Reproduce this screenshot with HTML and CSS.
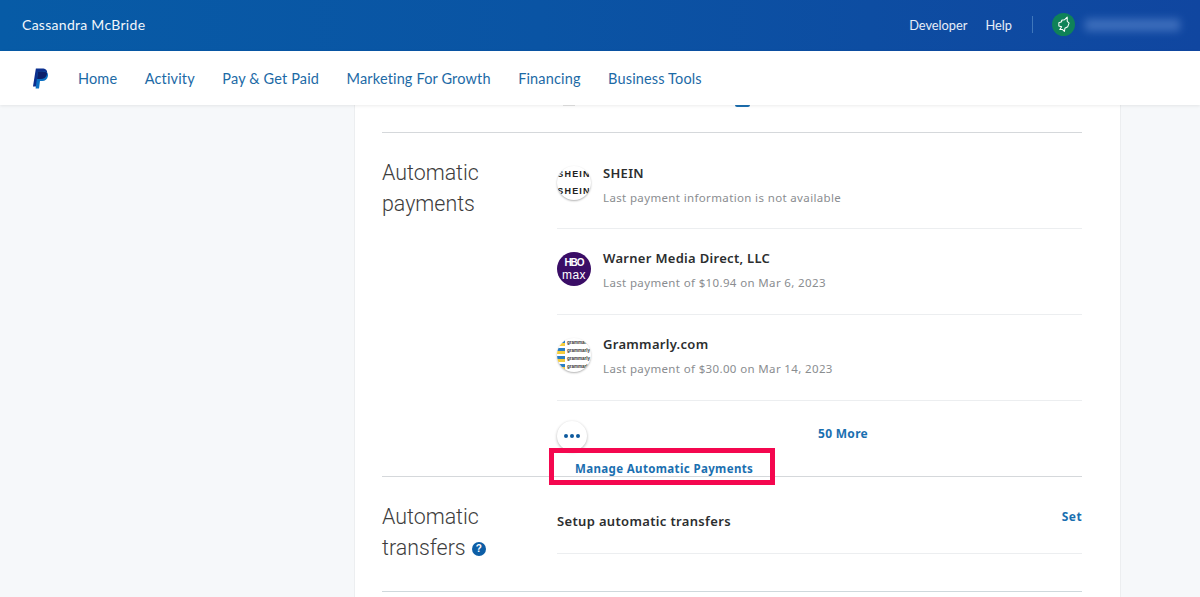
FILE: index.html
```html
<!DOCTYPE html>
<html lang="en">
<head>
<meta charset="utf-8">
<title>PayPal settings</title>
<link rel="stylesheet" href="styles.css">
</head>
<body>
<header class="topbar">
  <span class="user-name">Cassandra McBride</span>
  <div class="top-links">
    <a class="top-link">Developer</a>
    <a class="top-link">Help</a>
    <span class="top-sep"></span>
    <span class="avatar">
      <svg width="13" height="17" viewBox="0 0 14 18"><path d="M11 1 L11 5.5 L13 7.5 L11.5 11.5 L8.5 13 L8 16.5 L6 14.5 L3 14.5 L5 11.5 L2 10.5 L2 7 L5 6 L5 4.5 L8 4 Z" fill="none" stroke="#fff" stroke-width="1.1" stroke-linejoin="round"/></svg>
    </span>
    <span class="blurred-name"></span>
  </div>
</header>
<nav class="mainnav">
  <svg class="pp-logo" width="17" height="21" viewBox="0 0 19 24">
    <path d="M4.2 0.5h7.2c3.9 0 6.3 2.2 5.7 5.8-.7 4.2-3.7 6.3-7.4 6.3H6.6L5.2 21H0.9z" fill="#0b2f8f"/>
    <path d="M6.4 4h6.6c3.4 0 5.6 1.9 5 5.2-.6 3.8-3.3 5.7-6.6 5.7H8.9L7.8 23.5H3.9z" fill="#0a6fc2"/>
    <path d="M6.4 4h5.2c3 0 5 .9 5.5 2.3-.7 4.2-3.7 6.3-7.4 6.3H6.6l-1 .1z" fill="#0b1f6b"/>
  </svg>
  <a class="nav-link">Home</a>
  <a class="nav-link">Activity</a>
  <a class="nav-link">Pay &amp; Get Paid</a>
  <a class="nav-link">Marketing For Growth</a>
  <a class="nav-link">Financing</a>
  <a class="nav-link">Business Tools</a>
</nav>
<main class="page">
  <div class="card">
    <div class="clip-row">
      <span class="clip-grey"></span>
      <span class="clip-blue"></span>
    </div>
    <section class="section section-payments">
      <h2 class="section-title">Automatic<br>payments</h2>
      <div class="section-body">
        <div class="item item-first">
          <span class="logo logo-shein"><span>SHEIN</span><span>SHEIN</span></span>
          <div class="item-text">
            <div class="item-name">SHEIN</div>
            <div class="item-sub">Last payment information is not available</div>
          </div>
        </div>
        <div class="item">
          <span class="logo logo-hbo"><span class="hbo">HBO</span><span class="max">max</span></span>
          <div class="item-text">
            <div class="item-name">Warner Media Direct, LLC</div>
            <div class="item-sub">Last payment of $10.94 on Mar 6, 2023</div>
          </div>
        </div>
        <div class="item">
          <span class="logo logo-gram">
            <span class="gram-row">grammarly</span>
            <span class="gram-row">grammarly</span>
            <span class="gram-row">grammarly</span>
            <span class="gram-row">grammarly</span>
          </span>
          <div class="item-text">
            <div class="item-name">Grammarly.com</div>
            <div class="item-sub">Last payment of $30.00 on Mar 14, 2023</div>
          </div>
        </div>
        <div class="more-row">
          <span class="more-btn"><i></i><i></i><i></i></span>
          <a class="more-link">50 More</a>
        </div>
        <div class="manage-row">
          <a class="manage-link">Manage Automatic Payments</a>
          <span class="highlight"></span>
        </div>
      </div>
    </section>
    <section class="section section-transfers">
      <h2 class="section-title">Automatic<br>transfers <span class="help">?</span></h2>
      <div class="section-body">
        <div class="setup-row">
          <span class="setup-label">Setup automatic transfers</span>
          <a class="set-link">Set</a>
        </div>
      </div>
    </section>
  </div>
</main>
</body>
</html>
```
FILE: styles.css
```css
* { box-sizing: border-box; }
html, body { margin: 0; height: 100%; }
body {
  height: 597px;
  overflow: hidden;
  background: #f6f8fa;
  font-family: "Noto Sans", "Open Sans", sans-serif;
  display: flex;
  flex-direction: column;
}
.topbar {
  height: 51px;
  flex: none;
  padding: 0 20px 2px 22px;
  display: flex;
  align-items: center;
  justify-content: space-between;
  background: linear-gradient(90deg, #075ba6 0%, #0a54a4 45%, #1046a0 100%);
  color: #fff;
}
.user-name { font-family: "Lato", sans-serif; font-size: 14px; letter-spacing: .28px; color: #f1f6fb; }
.top-links { display: flex; align-items: center; }
.top-link { font-family: "Lato", sans-serif; font-size: 12.8px; letter-spacing: 0; color: #e6eef8; margin-right: 18px; }
.top-link + .top-link { margin-right: 20px; }
.top-sep { width: 1px; height: 17px; background: #3f77bb; margin-right: 19px; }
.avatar {
  width: 23px; height: 23px; border-radius: 50%;
  background: #0f8258;
  display: flex; align-items: center; justify-content: center;
  margin-right: 10px;
}
.blurred-name {
  width: 95px; height: 12px;
  background: #4a79c4;
  filter: blur(4px);
  opacity: .8;
}
.mainnav {
  height: 54px;
  flex: none;
  display: flex;
  align-items: center;
  padding: 0 0 0 32px;
  background: #fff;
  box-shadow: 0 1px 3px rgba(0,0,0,.08);
  position: relative;
  z-index: 2;
}
.pp-logo { margin-right: 29px; flex: none; }
.nav-link { font-family: "Lato", sans-serif; font-size: 14.5px; letter-spacing: .15px; color: #1c6aa6; margin-right: 27.5px; }
.page { flex: 1; min-height: 0; display: flex; padding-left: 354px; overflow: hidden; }
.card {
  width: 767px;
  flex: none;
  background: #fff;
  border-left: 1px solid #eceef0;
  border-right: 1px solid #eceef0;
  padding: 0 38px 0 27px;
}
.clip-row { height: 28px; position: relative; border-bottom: 1px solid #d5d8db; overflow: hidden; }
.clip-grey { position: absolute; left: 181px; top: 0; width: 12px; height: 1px; background: #e2e2e2; }
.clip-blue { position: absolute; left: 353px; top: 0; width: 15px; height: 2px; border-radius: 0 0 8px 8px; background: #1c6fb0; }
.section { display: flex; }
.section-payments { height: 344px; padding-top: 24px; border-bottom: 1px solid #d5d8db; }
.section-transfers { height: 115px; padding-top: 24px; border-bottom: 1px solid #cfd8dc; }
.section-title {
  width: 175px;
  flex: none;
  margin: 0;
  font-family: "Roboto", sans-serif;
  font-size: 21.4px;
  font-weight: 300;
  line-height: 31px;
  color: #3d3d3d;
}
.help {
  display: inline-flex;
  width: 14px; height: 14px;
  border-radius: 50%;
  background: #0d5ea6;
  color: #fff;
  font-family: "Liberation Sans", sans-serif;
  font-size: 10px;
  font-weight: 700;
  align-items: center;
  justify-content: center;
  vertical-align: 3px;
  margin-left: 1px;
}
.section-body { flex: 1; min-width: 0; }
.item {
  display: flex;
  height: 86px;
  border-bottom: 1px solid #eceef0;
  padding-top: 23px;
}
.item-first { height: 72px; padding-top: 9px; }
.logo {
  width: 34px; height: 34px;
  border-radius: 50%;
  flex: none;
  overflow: hidden;
  margin-right: 12px;
  display: flex;
  flex-direction: column;
  align-items: center;
  justify-content: center;
  background: #fff;
  box-shadow: 0 1px 2px rgba(0,0,0,.3);
}
.logo-shein { font-family: "Liberation Sans", sans-serif; font-size: 9px; font-weight: 700; letter-spacing: 1.2px; color: #222; gap: 8px; line-height: 9px; white-space: nowrap; }
.logo-hbo { background: #3a0d66; color: #fff; box-shadow: none; font-family: "Liberation Sans", sans-serif; }
.hbo { font-size: 10px; font-weight: 700; letter-spacing: -1px; line-height: 12px; }
.max { font-size: 12px; letter-spacing: .4px; line-height: 13px; margin-top: 0; }
.logo-gram { align-items: flex-start; font-family: "Liberation Sans", sans-serif; font-size: 4.5px; font-weight: 700; color: #333; line-height: 8px; white-space: nowrap; }
.gram-row { display: block; padding-left: 10px; background: linear-gradient(180deg, #2b7fc4 0 45%, #f3cd3d 45% 100%) left center / 8px 6px no-repeat; }
.item-text { min-width: 0; margin-top: -3px; }
.item-first .item-text { margin-top: -2px; }
.item-name { font-size: 13px; font-weight: 600; letter-spacing: .3px; color: #2c2e2f; line-height: 18px; }
.item-sub { font-size: 11.5px; letter-spacing: .36px; color: #8a8d90; line-height: 18px; margin-top: 7px; }
.more-row { display: flex; height: 60px; padding-top: 20px; }
.more-btn {
  width: 30px; height: 30px;
  border-radius: 50%;
  background: #fff;
  box-shadow: 0 1px 3px rgba(0,0,0,.3);
  display: flex; align-items: center; justify-content: center;
  gap: 2px;
}
.more-btn i { width: 4px; height: 4px; border-radius: 50%; background: #0d5a9e; }
.more-link { margin-left: 231px; font-size: 12px; font-weight: 700; letter-spacing: .3px; color: #1a6fb0; line-height: 26px; }
.manage-row { position: relative; height: 20px; padding-left: 18px; margin-top: -5px; }
.manage-link { font-size: 11.5px; font-weight: 700; letter-spacing: .36px; color: #1a6fb0; line-height: 20px; }
.highlight {
  position: absolute;
  left: -8px; top: -8px;
  width: 226px; height: 37px;
  border: 5px solid #f4074f;
  pointer-events: none;
}
.setup-row { display: flex; justify-content: space-between; height: 53px; border-bottom: 1px solid #eceef0; padding-top: 10px; }
.setup-label { font-size: 13px; font-weight: 600; letter-spacing: .34px; color: #2c2e2f; line-height: 20px; }
.set-link { font-size: 12px; font-weight: 700; letter-spacing: .4px; color: #1a6fb0; line-height: 12px; }
```
